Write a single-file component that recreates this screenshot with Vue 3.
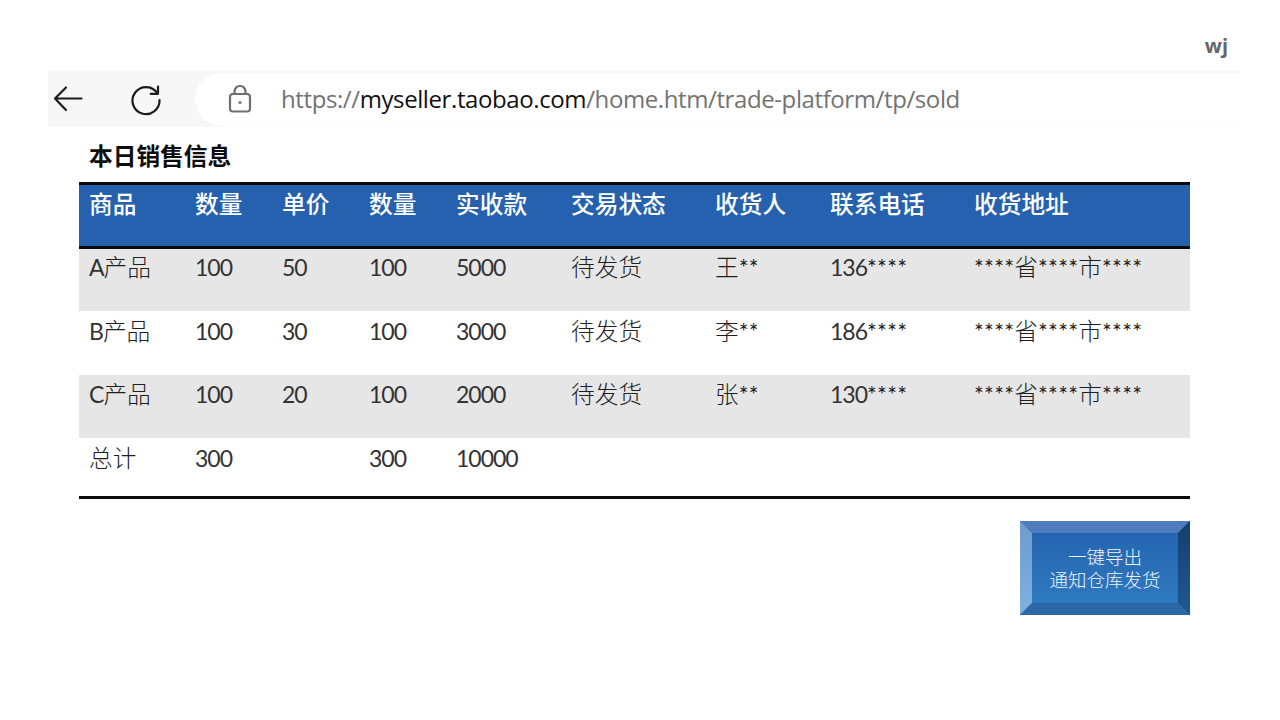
<script setup>
const columns = [
  { label: '商品', width: 106 },
  { label: '数量', width: 87 },
  { label: '单价', width: 87 },
  { label: '数量', width: 87 },
  { label: '实收款', width: 115 },
  { label: '交易状态', width: 144 },
  { label: '收货人', width: 115 },
  { label: '联系电话', width: 144 },
  { label: '收货地址', width: 226 }
]

const rows = [
  { height: 62, pad: 0, shade: true, cells: ['A产品', '100', '50', '100', '5000', '待发货', '王**', '136****', '****省****市****'] },
  { height: 64, pad: 2, shade: false, cells: ['B产品', '100', '30', '100', '3000', '待发货', '李**', '186****', '****省****市****'] },
  { height: 63, pad: 1, shade: true, cells: ['C产品', '100', '20', '100', '2000', '待发货', '张**', '130****', '****省****市****'] },
  { height: 58, pad: 2, shade: false, cells: ['总计', '300', '', '300', '10000', '', '', '', ''] }
]

// Latin and asterisk runs are sized apart from the CJK runs, as in the reference
const runs = (text) =>
  (text.match(/[\u4e00-\u9fff]+|\*+|[^\u4e00-\u9fff*]+/g) || []).map((t) => ({
    text: t,
    kind: /[\u4e00-\u9fff]/.test(t) ? 'cjk' : t[0] === '*' ? 'mask' : 'latin'
  }))
</script>

<template>
  <div class="page">
    <div class="user">wj</div>

    <div class="browser">
      <div class="nav">
        <svg class="back" width="30" height="28" viewBox="0 0 30 28" fill="none" stroke="#1c1c1c" stroke-width="2.2" stroke-linecap="round" stroke-linejoin="round">
          <path d="M2 13.5H28.5M13 2.5L2 13.5L13 25" />
        </svg>
        <svg class="reload" width="32" height="32" viewBox="0 0 32 32" fill="none" stroke="#1c1c1c" stroke-width="2.2" stroke-linecap="round" stroke-linejoin="round">
          <path d="M27.5 9.5A13.5 13.5 0 1 0 29.5 16" />
          <path d="M28 2.5V9.8H20.7" />
        </svg>
      </div>
      <div class="address">
        <svg class="lock" width="24" height="28" viewBox="0 0 24 28" fill="none" stroke="#6f6f6f" stroke-width="2.2">
          <rect x="2" y="9" width="20" height="17.5" rx="3" />
          <path d="M6.5 9V6.5a5.5 5.5 0 0 1 11 0V9" />
          <circle cx="12" cy="17.5" r="1.5" fill="#6f6f6f" stroke="none" />
        </svg>
        <span class="url">https://<b>myseller.taobao.com</b>/home.htm/trade-platform/tp/sold</span>
      </div>
    </div>

    <h1 class="title">本日销售信息</h1>

    <table class="sales">
      <colgroup>
        <col v-for="(c, i) in columns" :key="i" :style="{ width: c.width + 'px' }" />
      </colgroup>
      <thead>
        <tr>
          <th v-for="(c, i) in columns" :key="i">{{ c.label }}</th>
        </tr>
      </thead>
      <tbody>
        <tr v-for="(r, i) in rows" :key="i" :class="{ shade: r.shade }" :style="{ height: r.height + 'px' }">
          <td v-for="(cell, j) in r.cells" :key="j" :style="{ paddingTop: r.pad + 'px' }">
            <span v-for="(run, k) in runs(cell)" :key="k" :class="run.kind">{{ run.text }}</span>
          </td>
        </tr>
      </tbody>
    </table>

    <div class="actions">
      <button class="export" type="button">
        <svg class="bevel" width="170" height="94" viewBox="0 0 170 94" aria-hidden="true">
          <defs>
            <linearGradient id="bl" x1="0" y1="0" x2="0" y2="1">
              <stop offset="0" stop-color="#6e9bcb" />
              <stop offset="1" stop-color="#7fb2de" />
            </linearGradient>
            <linearGradient id="br" x1="0" y1="0" x2="0" y2="1">
              <stop offset="0" stop-color="#173d70" />
              <stop offset="1" stop-color="#1d5a92" />
            </linearGradient>
          </defs>
          <polygon points="0,0 170,0 158,12 12,12" fill="#4f7cbc" />
          <polygon points="0,0 12,12 12,82 0,94" fill="url(#bl)" />
          <polygon points="170,0 170,94 158,82 158,12" fill="url(#br)" />
          <polygon points="0,94 12,82 158,82 170,94" fill="#2b68a5" />
        </svg>
        <span class="export-text">一键导出<br />通知仓库发货</span>
      </button>
    </div>
  </div>
</template>

<style scoped>
.page {
  width: 1280px;
  height: 720px;
  box-sizing: border-box;
  padding-top: 33px;
  overflow: hidden;
  background: #fff;
  font-family: "Noto Sans CJK SC", sans-serif;
  color: #1a1a1a;
}
.user {
  height: 38px;
  padding-right: 52px;
  text-align: right;
  font: 700 20px/26px "Open Sans", sans-serif;
  color: #666;
}
.browser {
  display: flex;
  align-items: stretch;
  width: 1192px;
  height: 56px;
  margin-left: 48px;
  background: #f7f7f7;
}
.nav {
  display: flex;
  align-items: center;
  width: 147px;
  flex: none;
  padding-left: 5px;
  box-sizing: border-box;
}
.reload {
  margin-left: 47px;
  margin-top: 1px;
}
.address {
  display: flex;
  align-items: center;
  flex: 1;
  margin: 2px 0 1px;
  padding-left: 33px;
  background: #fff;
  border-radius: 27px 0 0 27px;
}
.lock {
  margin-top: -1px;
}
.url {
  margin-left: 29px;
  margin-top: -2px;
  font: 400 24px/32px "Open Sans", sans-serif;
  letter-spacing: -0.4px;
  color: #737373;
  white-space: nowrap;
}
.url b {
  font-weight: 400;
  color: #111;
}
.title {
  margin: 10px 0 0 89px;
  height: 45px;
  font-size: 23.7px;
  line-height: 36px;
  font-weight: 700;
  color: #0d0d0d;
}
.sales {
  width: 1111px;
  margin-left: 79px;
  table-layout: fixed;
  border-collapse: separate;
  border-spacing: 0;
  border-bottom: 3px solid #0a0a0a;
}
thead th {
  height: 61px;
  padding: 0 0 0 10px;
  box-sizing: content-box;
  background: #2561ae;
  border-top: 3px solid #0a0a0a;
  border-bottom: 3px solid #0a0a0a;
  color: #fff;
  font-size: 23.7px;
  font-weight: 500;
  line-height: 36px;
  text-align: left;
  vertical-align: top;
  white-space: nowrap;
}
tbody td {
  padding: 0 0 0 10px;
  font-size: 23.7px;
  font-weight: 300;
  line-height: 34px;
  vertical-align: top;
  white-space: nowrap;
  color: #1f1f1f;
}
tr.shade td {
  background: #e6e6e6;
}
.latin,
.mask {
  font-family: Lato, sans-serif;
  font-size: 23px;
  font-weight: 400;
  color: #333;
}
.latin {
  letter-spacing: -1px;
}
.mask {
  letter-spacing: 0.3px;
  color: #1f1f1f;
}
.actions {
  display: flex;
  justify-content: flex-end;
  width: 1190px;
  margin-top: 22px;
}
.export {
  position: relative;
  width: 170px;
  height: 94px;
  padding: 0;
  border: 0;
  background: linear-gradient(180deg, #2561ae, #2f7dc2);
  font-family: "Noto Sans CJK SC", sans-serif;
  font-size: 18.5px;
  font-weight: 300;
  line-height: 23px;
  color: #eef5fc;
}
.bevel {
  position: absolute;
  left: 0;
  top: 0;
}
.export-text {
  position: relative;
  display: block;
}
</style>
